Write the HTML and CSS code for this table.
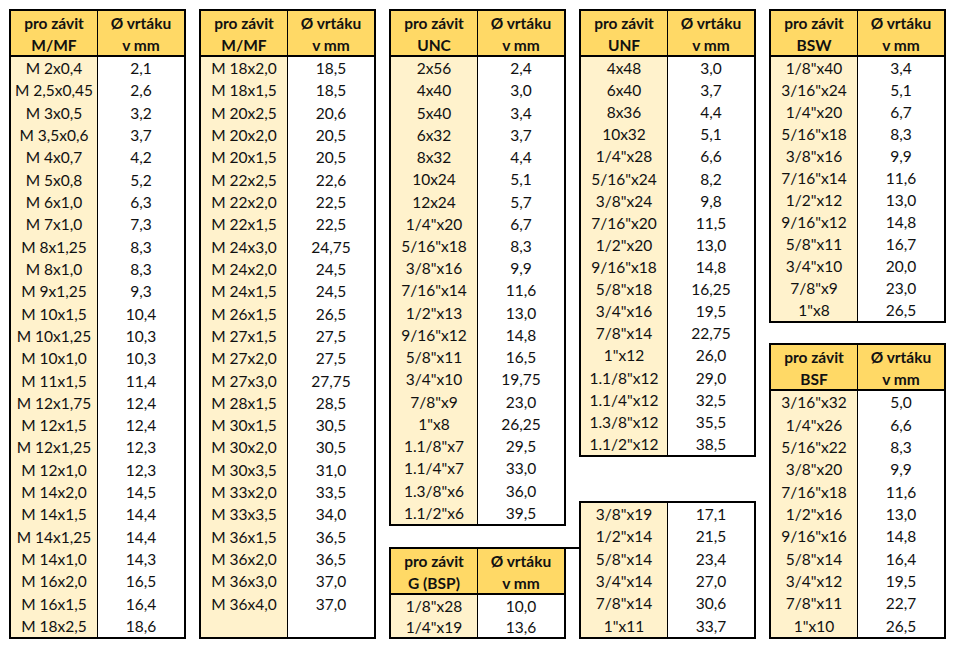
FILE: index.html
```html
<!DOCTYPE html>
<html lang="cs">
<head>
<meta charset="utf-8">
<title>Vrtáky pro závity</title>
<link rel="stylesheet" href="styles.css">
</head>
<body>
<div class="sheet">
  <div class="col">
    <div class="tbl h-full">
      <div class="hd"><div class="c k">pro závit<br>M/MF</div><div class="c v">Ø vrtáku<br>v mm</div></div>
      <div class="bd">
        <div class="r"><span class="c k">M 2x0,4</span><span class="c v">2,1</span></div>
        <div class="r"><span class="c k">M 2,5x0,45</span><span class="c v">2,6</span></div>
        <div class="r"><span class="c k">M 3x0,5</span><span class="c v">3,2</span></div>
        <div class="r"><span class="c k">M 3,5x0,6</span><span class="c v">3,7</span></div>
        <div class="r"><span class="c k">M 4x0,7</span><span class="c v">4,2</span></div>
        <div class="r"><span class="c k">M 5x0,8</span><span class="c v">5,2</span></div>
        <div class="r"><span class="c k">M 6x1,0</span><span class="c v">6,3</span></div>
        <div class="r"><span class="c k">M 7x1,0</span><span class="c v">7,3</span></div>
        <div class="r"><span class="c k">M 8x1,25</span><span class="c v">8,3</span></div>
        <div class="r"><span class="c k">M 8x1,0</span><span class="c v">8,3</span></div>
        <div class="r"><span class="c k">M 9x1,25</span><span class="c v">9,3</span></div>
        <div class="r"><span class="c k">M 10x1,5</span><span class="c v">10,4</span></div>
        <div class="r"><span class="c k">M 10x1,25</span><span class="c v">10,3</span></div>
        <div class="r"><span class="c k">M 10x1,0</span><span class="c v">10,3</span></div>
        <div class="r"><span class="c k">M 11x1,5</span><span class="c v">11,4</span></div>
        <div class="r"><span class="c k">M 12x1,75</span><span class="c v">12,4</span></div>
        <div class="r"><span class="c k">M 12x1,5</span><span class="c v">12,4</span></div>
        <div class="r"><span class="c k">M 12x1,25</span><span class="c v">12,3</span></div>
        <div class="r"><span class="c k">M 12x1,0</span><span class="c v">12,3</span></div>
        <div class="r"><span class="c k">M 14x2,0</span><span class="c v">14,5</span></div>
        <div class="r"><span class="c k">M 14x1,5</span><span class="c v">14,4</span></div>
        <div class="r"><span class="c k">M 14x1,25</span><span class="c v">14,4</span></div>
        <div class="r"><span class="c k">M 14x1,0</span><span class="c v">14,3</span></div>
        <div class="r"><span class="c k">M 16x2,0</span><span class="c v">16,5</span></div>
        <div class="r"><span class="c k">M 16x1,5</span><span class="c v">16,4</span></div>
        <div class="r"><span class="c k">M 18x2,5</span><span class="c v">18,6</span></div>
      </div>
    </div>
  </div>

  <div class="col">
    <div class="tbl h-full">
      <div class="hd"><div class="c k">pro závit<br>M/MF</div><div class="c v">Ø vrtáku<br>v mm</div></div>
      <div class="bd">
        <div class="r"><span class="c k">M 18x2,0</span><span class="c v">18,5</span></div>
        <div class="r"><span class="c k">M 18x1,5</span><span class="c v">18,5</span></div>
        <div class="r"><span class="c k">M 20x2,5</span><span class="c v">20,6</span></div>
        <div class="r"><span class="c k">M 20x2,0</span><span class="c v">20,5</span></div>
        <div class="r"><span class="c k">M 20x1,5</span><span class="c v">20,5</span></div>
        <div class="r"><span class="c k">M 22x2,5</span><span class="c v">22,6</span></div>
        <div class="r"><span class="c k">M 22x2,0</span><span class="c v">22,5</span></div>
        <div class="r"><span class="c k">M 22x1,5</span><span class="c v">22,5</span></div>
        <div class="r"><span class="c k">M 24x3,0</span><span class="c v">24,75</span></div>
        <div class="r"><span class="c k">M 24x2,0</span><span class="c v">24,5</span></div>
        <div class="r"><span class="c k">M 24x1,5</span><span class="c v">24,5</span></div>
        <div class="r"><span class="c k">M 26x1,5</span><span class="c v">26,5</span></div>
        <div class="r"><span class="c k">M 27x1,5</span><span class="c v">27,5</span></div>
        <div class="r"><span class="c k">M 27x2,0</span><span class="c v">27,5</span></div>
        <div class="r"><span class="c k">M 27x3,0</span><span class="c v">27,75</span></div>
        <div class="r"><span class="c k">M 28x1,5</span><span class="c v">28,5</span></div>
        <div class="r"><span class="c k">M 30x1,5</span><span class="c v">30,5</span></div>
        <div class="r"><span class="c k">M 30x2,0</span><span class="c v">30,5</span></div>
        <div class="r"><span class="c k">M 30x3,5</span><span class="c v">31,0</span></div>
        <div class="r"><span class="c k">M 33x2,0</span><span class="c v">33,5</span></div>
        <div class="r"><span class="c k">M 33x3,5</span><span class="c v">34,0</span></div>
        <div class="r"><span class="c k">M 36x1,5</span><span class="c v">36,5</span></div>
        <div class="r"><span class="c k">M 36x2,0</span><span class="c v">36,5</span></div>
        <div class="r"><span class="c k">M 36x3,0</span><span class="c v">37,0</span></div>
        <div class="r"><span class="c k">M 36x4,0</span><span class="c v">37,0</span></div>
        <div class="r"><span class="c k"></span><span class="c v"></span></div>
      </div>
    </div>
  </div>

  <div class="col">
    <div class="tbl h-unc">
      <div class="hd"><div class="c k">pro závit<br>UNC</div><div class="c v">Ø vrtáku<br>v mm</div></div>
      <div class="bd">
        <div class="r"><span class="c k">2x56</span><span class="c v">2,4</span></div>
        <div class="r"><span class="c k">4x40</span><span class="c v">3,0</span></div>
        <div class="r"><span class="c k">5x40</span><span class="c v">3,4</span></div>
        <div class="r"><span class="c k">6x32</span><span class="c v">3,7</span></div>
        <div class="r"><span class="c k">8x32</span><span class="c v">4,4</span></div>
        <div class="r"><span class="c k">10x24</span><span class="c v">5,1</span></div>
        <div class="r"><span class="c k">12x24</span><span class="c v">5,7</span></div>
        <div class="r"><span class="c k">1/4"x20</span><span class="c v">6,7</span></div>
        <div class="r"><span class="c k">5/16"x18</span><span class="c v">8,3</span></div>
        <div class="r"><span class="c k">3/8"x16</span><span class="c v">9,9</span></div>
        <div class="r"><span class="c k">7/16"x14</span><span class="c v">11,6</span></div>
        <div class="r"><span class="c k">1/2"x13</span><span class="c v">13,0</span></div>
        <div class="r"><span class="c k">9/16"x12</span><span class="c v">14,8</span></div>
        <div class="r"><span class="c k">5/8"x11</span><span class="c v">16,5</span></div>
        <div class="r"><span class="c k">3/4"x10</span><span class="c v">19,75</span></div>
        <div class="r"><span class="c k">7/8"x9</span><span class="c v">23,0</span></div>
        <div class="r"><span class="c k">1"x8</span><span class="c v">26,25</span></div>
        <div class="r"><span class="c k">1.1/8"x7</span><span class="c v">29,5</span></div>
        <div class="r"><span class="c k">1.1/4"x7</span><span class="c v">33,0</span></div>
        <div class="r"><span class="c k">1.3/8"x6</span><span class="c v">36,0</span></div>
        <div class="r"><span class="c k">1.1/2"x6</span><span class="c v">39,5</span></div>
      </div>
    </div>
    <div class="tbl h-g joined">
      <div class="hd"><div class="c k">pro závit<br>G (BSP)</div><div class="c v">Ø vrtáku<br>v mm</div></div>
      <div class="bd">
        <div class="r"><span class="c k">1/8"x28</span><span class="c v">10,0</span></div>
        <div class="r"><span class="c k">1/4"x19</span><span class="c v">13,6</span></div>
      </div>
    </div>
  </div>

  <div class="col">
    <div class="tbl h-unf">
      <div class="hd"><div class="c k">pro závit<br>UNF</div><div class="c v">Ø vrtáku<br>v mm</div></div>
      <div class="bd">
        <div class="r"><span class="c k">4x48</span><span class="c v">3,0</span></div>
        <div class="r"><span class="c k">6x40</span><span class="c v">3,7</span></div>
        <div class="r"><span class="c k">8x36</span><span class="c v">4,4</span></div>
        <div class="r"><span class="c k">10x32</span><span class="c v">5,1</span></div>
        <div class="r"><span class="c k">1/4"x28</span><span class="c v">6,6</span></div>
        <div class="r"><span class="c k">5/16"x24</span><span class="c v">8,2</span></div>
        <div class="r"><span class="c k">3/8"x24</span><span class="c v">9,8</span></div>
        <div class="r"><span class="c k">7/16"x20</span><span class="c v">11,5</span></div>
        <div class="r"><span class="c k">1/2"x20</span><span class="c v">13,0</span></div>
        <div class="r"><span class="c k">9/16"x18</span><span class="c v">14,8</span></div>
        <div class="r"><span class="c k">5/8"x18</span><span class="c v">16,25</span></div>
        <div class="r"><span class="c k">3/4"x16</span><span class="c v">19,5</span></div>
        <div class="r"><span class="c k">7/8"x14</span><span class="c v">22,75</span></div>
        <div class="r"><span class="c k">1"x12</span><span class="c v">26,0</span></div>
        <div class="r"><span class="c k">1.1/8"x12</span><span class="c v">29,0</span></div>
        <div class="r"><span class="c k">1.1/4"x12</span><span class="c v">32,5</span></div>
        <div class="r"><span class="c k">1.3/8"x12</span><span class="c v">35,5</span></div>
        <div class="r"><span class="c k">1.1/2"x12</span><span class="c v">38,5</span></div>
      </div>
    </div>
    <div class="tbl h-unf2">
      <div class="bd">
        <div class="r"><span class="c k">3/8"x19</span><span class="c v">17,1</span></div>
        <div class="r"><span class="c k">1/2"x14</span><span class="c v">21,5</span></div>
        <div class="r"><span class="c k">5/8"x14</span><span class="c v">23,4</span></div>
        <div class="r"><span class="c k">3/4"x14</span><span class="c v">27,0</span></div>
        <div class="r"><span class="c k">7/8"x14</span><span class="c v">30,6</span></div>
        <div class="r"><span class="c k">1"x11</span><span class="c v">33,7</span></div>
      </div>
    </div>
  </div>

  <div class="col">
    <div class="tbl h-bsw">
      <div class="hd"><div class="c k">pro závit<br>BSW</div><div class="c v">Ø vrtáku<br>v mm</div></div>
      <div class="bd">
        <div class="r"><span class="c k">1/8"x40</span><span class="c v">3,4</span></div>
        <div class="r"><span class="c k">3/16"x24</span><span class="c v">5,1</span></div>
        <div class="r"><span class="c k">1/4"x20</span><span class="c v">6,7</span></div>
        <div class="r"><span class="c k">5/16"x18</span><span class="c v">8,3</span></div>
        <div class="r"><span class="c k">3/8"x16</span><span class="c v">9,9</span></div>
        <div class="r"><span class="c k">7/16"x14</span><span class="c v">11,6</span></div>
        <div class="r"><span class="c k">1/2"x12</span><span class="c v">13,0</span></div>
        <div class="r"><span class="c k">9/16"x12</span><span class="c v">14,8</span></div>
        <div class="r"><span class="c k">5/8"x11</span><span class="c v">16,7</span></div>
        <div class="r"><span class="c k">3/4"x10</span><span class="c v">20,0</span></div>
        <div class="r"><span class="c k">7/8"x9</span><span class="c v">23,0</span></div>
        <div class="r"><span class="c k">1"x8</span><span class="c v">26,5</span></div>
      </div>
    </div>
    <div class="tbl h-bsf">
      <div class="hd"><div class="c k">pro závit<br>BSF</div><div class="c v">Ø vrtáku<br>v mm</div></div>
      <div class="bd">
        <div class="r"><span class="c k">3/16"x32</span><span class="c v">5,0</span></div>
        <div class="r"><span class="c k">1/4"x26</span><span class="c v">6,6</span></div>
        <div class="r"><span class="c k">5/16"x22</span><span class="c v">8,3</span></div>
        <div class="r"><span class="c k">3/8"x20</span><span class="c v">9,9</span></div>
        <div class="r"><span class="c k">7/16"x18</span><span class="c v">11,6</span></div>
        <div class="r"><span class="c k">1/2"x16</span><span class="c v">13,0</span></div>
        <div class="r"><span class="c k">9/16"x16</span><span class="c v">14,8</span></div>
        <div class="r"><span class="c k">5/8"x14</span><span class="c v">16,4</span></div>
        <div class="r"><span class="c k">3/4"x12</span><span class="c v">19,5</span></div>
        <div class="r"><span class="c k">7/8"x11</span><span class="c v">22,7</span></div>
        <div class="r"><span class="c k">1"x10</span><span class="c v">26,5</span></div>
      </div>
    </div>
  </div>
</div>
</body>
</html>
```

FILE: styles.css
```css
* { box-sizing: border-box; }

html, body {
  margin: 0;
  padding: 0;
  background: #ffffff;
}

body {
  font-family: Lato, "Open Sans", "Liberation Sans", sans-serif;
  font-size: 15.5px;
  color: #111111;
}

.sheet {
  display: flex;
  gap: 13px;
  padding: 9px 0 0 9px;
}

.col {
  width: 177px;
  height: 630px;
  display: flex;
  flex-direction: column;
  justify-content: space-between;
}

.tbl {
  position: relative;
  border: 2px solid #000;
  display: flex;
  flex-direction: column;
  background: #fff;
}

.h-full { height: 630px; }
.h-unc  { height: 517px; }
.h-g    { height: 92px; }
.h-unf  { height: 448px; }
.h-unf2 { height: 138px; }
.h-bsw  { height: 314px; }
.h-bsf  { height: 296px; }

.joined::after {
  content: "";
  position: absolute;
  top: -2px;
  left: 100%;
  width: 17px;
  height: 2px;
  background: #000;
}

.hd {
  display: flex;
  height: 46px;
  flex: none;
  border-bottom: 2px solid #000;
  background: #ffd966;
  font-weight: 700;
  line-height: 22px;
}

.bd {
  flex: 1;
  display: flex;
  flex-direction: column;
}

.r {
  flex: 1;
  display: flex;
  min-height: 0;
}

.c {
  display: flex;
  align-items: center;
  justify-content: center;
  text-align: center;
  white-space: nowrap;
}

.hd .c {
  display: block;
  padding-top: 1px;
}

.k {
  width: 87px;
  border-right: 1px solid #000;
  background: #fff2cc;
}

.hd .k { background: transparent; }

.v {
  width: 86px;
}
```
